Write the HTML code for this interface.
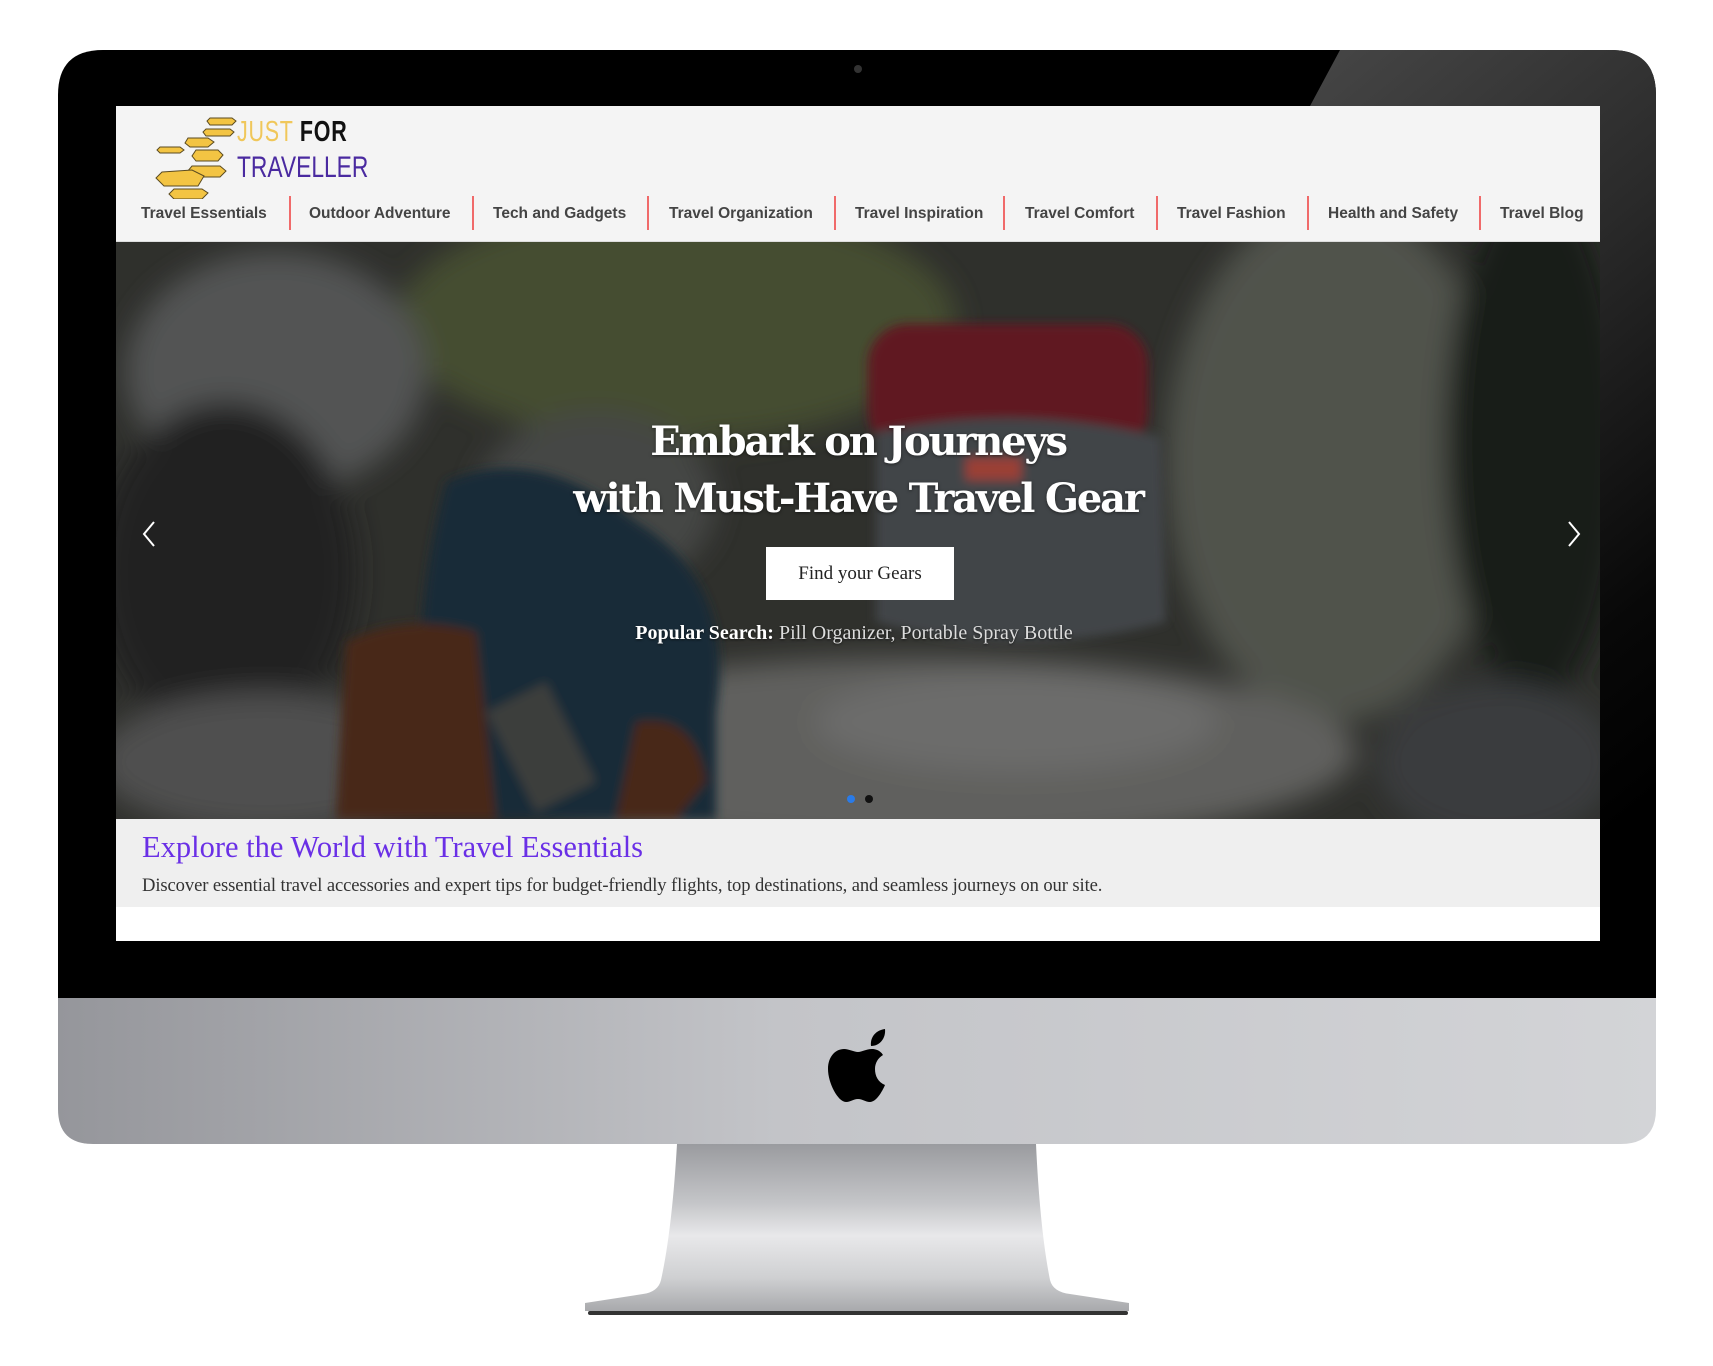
<!DOCTYPE html>
<html><head><meta charset="utf-8"><style>
*{margin:0;padding:0;box-sizing:border-box}
body{width:1713px;height:1366px;background:#fff;position:relative;overflow:hidden;font-family:"Liberation Sans",sans-serif}
.abs{position:absolute}
#screen{left:116px;top:106px;width:1484px;height:835px;background:#fff;overflow:hidden}
#hdr{left:0;top:0;width:1484px;height:136px;background:#f4f4f4;border-bottom:1px solid #ddd}
.nav{top:98px;font-weight:bold;font-size:15.5px;color:#444;line-height:20px;white-space:nowrap}
.sep{top:90px;width:2px;height:34px;background:#f06a6a}
#hero{left:0;top:136px;width:1484px;height:577px;overflow:hidden}
.t{color:#fff;font-family:"DejaVu Serif","Liberation Serif",serif;font-weight:bold;text-align:center;width:1484px;left:0;letter-spacing:-2.2px;text-shadow:0 1px 3px rgba(0,0,0,.5)}
#exp{left:0;top:713px;width:1484px;height:88px;background:#efefef}
</style></head><body>
<svg class="abs" style="left:0;top:0" width="1713" height="1366">
<defs>
<linearGradient id="chin" x1="0" x2="1"><stop offset="0" stop-color="#95969b"/><stop offset=".45" stop-color="#c3c4c8"/><stop offset="1" stop-color="#d3d4d7"/></linearGradient>
<linearGradient id="neck" x1="0" y1="0" x2="0" y2="1"><stop offset="0" stop-color="#9a9b9f"/><stop offset=".35" stop-color="#c4c5c8"/><stop offset=".55" stop-color="#e8e8ea"/><stop offset=".8" stop-color="#cfd0d2"/><stop offset="1" stop-color="#a8a9ac"/></linearGradient>
<linearGradient id="glare" x1="0" y1="0" x2="0.3" y2="1"><stop offset="0" stop-color="#464646"/><stop offset=".4" stop-color="#2a2a2a"/><stop offset=".8" stop-color="#080808"/><stop offset="1" stop-color="#000"/></linearGradient>
</defs>
<path d="M58,998 L58,95 Q58,50 103,50 L1611,50 Q1656,50 1656,95 L1656,998 Z" fill="#000"/>
<path d="M1340,50 L1611,50 Q1656,50 1656,95 L1656,998 L1600,998 L1600,106 L1310,106 Z" fill="url(#glare)"/>
<path d="M58,998 L1656,998 L1656,1109 Q1656,1144 1621,1144 L93,1144 Q58,1144 58,1109 Z" fill="url(#chin)"/>
<circle cx="858" cy="69" r="4" fill="#333"/>
<path d="M677,1144 L1036,1144 Q1040,1230 1050,1280 Q1053,1292 1070,1294 L1129,1303 L1129,1311 L585,1311 L585,1303 L643,1294 Q658,1292 661,1280 Q672,1230 677,1144 Z" fill="url(#neck)"/>
<rect x="588" y="1311" width="540" height="4" rx="2" fill="#333"/>
<g transform="translate(17,0)">
<path d="M868 1029c-8 1-15 7-14 17 9 0 15-8 14-17zM855 1049c-6 0-10 3-14 3s-9-3-14-3c-8 0-16 7-16 20 0 14 10 33 18 33 5 0 7-3 12-3s7 3 12 3c6 0 12-10 15-17-7-3-10-9-10-16 0-6 3-11 8-14-3-5-8-6-11-6z" fill="#000"/>
</g>
</svg>
<div id="screen" class="abs">
 <div id="hdr" class="abs">
  <svg class="abs" style="left:32px;top:8px" width="120" height="85">
   <g fill="#f3c443" stroke="#5a4a20" stroke-width="1">
    <path d="M62,4 l22,0 4,3 -4,4 -22,0 -3,-4z"/><path d="M58,15 l24,0 4,3 -4,4 -24,0 -3,-4z"/>
    <path d="M40,24 l20,0 6,4 -6,5 -18,0 -5,-4z"/><path d="M12,33 l20,0 4,3 -4,3 -20,0 -3,-3z"/>
    <path d="M48,36 l22,0 5,5 -5,6 -22,0 -4,-5z"/><path d="M44,52 l28,0 6,5 -6,6 -28,0 -5,-5z"/>
    <path d="M14,58 l30,-2 12,6 -6,10 -34,0 -8,-8z"/><path d="M26,75 l28,0 6,4 -6,6 -28,0 -5,-5z"/>
   </g>
  </svg>
  <div class="abs" style="left:121px;top:10px;font-size:29px;letter-spacing:1px;transform:scaleX(.74);transform-origin:0 0;white-space:nowrap"><span style="color:#f0c75a">JUST</span> <span style="color:#111;font-weight:bold">FOR</span></div>
  <div class="abs" style="left:121px;top:45px;font-size:30px;color:#4a2aa0;transform:scaleX(.76);transform-origin:0 0;white-space:nowrap">TRAVELLER</div>
  <div class="abs nav" style="left:25px">Travel Essentials</div>
  <div class="abs sep" style="left:173px"></div>
  <div class="abs nav" style="left:193px">Outdoor Adventure</div>
  <div class="abs sep" style="left:356px"></div>
  <div class="abs nav" style="left:377px">Tech and Gadgets</div>
  <div class="abs sep" style="left:531px"></div>
  <div class="abs nav" style="left:553px">Travel Organization</div>
  <div class="abs sep" style="left:718px"></div>
  <div class="abs nav" style="left:739px">Travel Inspiration</div>
  <div class="abs sep" style="left:887px"></div>
  <div class="abs nav" style="left:909px">Travel Comfort</div>
  <div class="abs sep" style="left:1040px"></div>
  <div class="abs nav" style="left:1061px">Travel Fashion</div>
  <div class="abs sep" style="left:1191px"></div>
  <div class="abs nav" style="left:1212px">Health and Safety</div>
  <div class="abs sep" style="left:1363px"></div>
  <div class="abs nav" style="left:1384px">Travel Blog</div>
 </div>
 <div id="hero" class="abs">
  <svg width="1484" height="577" style="position:absolute;left:0;top:0">
   <defs><filter id="b"><feGaussianBlur stdDeviation="14"/></filter><filter id="b2"><feGaussianBlur stdDeviation="5"/></filter></defs>
   <rect width="1484" height="577" fill="#363733"/>
   <g filter="url(#b)">
    <ellipse cx="560" cy="80" rx="280" ry="120" fill="#4f5838"/>
    <ellipse cx="160" cy="130" rx="150" ry="120" fill="#5e6060"/>
    <ellipse cx="110" cy="330" rx="130" ry="170" fill="#262725"/>
    <ellipse cx="1220" cy="220" rx="170" ry="260" fill="#5c5e57"/>
    <ellipse cx="1420" cy="200" rx="90" ry="260" fill="#1e201d"/>
    <ellipse cx="1380" cy="520" rx="120" ry="80" fill="#434446"/>
    <ellipse cx="800" cy="510" rx="440" ry="95" fill="#6e6e6c"/>
    <ellipse cx="900" cy="480" rx="200" ry="50" fill="#7c7c7a"/>
    <ellipse cx="150" cy="520" rx="170" ry="70" fill="#5a5a5a"/>
    <ellipse cx="480" cy="260" rx="120" ry="90" fill="#4f5150"/>
   </g>
   <g filter="url(#b2)">
    <rect x="752" y="82" width="280" height="128" rx="40" fill="#6e1c26"/>
    <path d="M760,190 Q900,160 1045,195 L1050,380 Q900,420 760,380 Z" fill="#4c4f52"/>
    <rect x="850" y="216" width="55" height="22" fill="#b04a3c"/>
    <path d="M330,240 Q420,200 520,280 Q620,340 600,470 L600,577 L330,577 Q280,430 330,240Z" fill="#1c3140"/>
    <path d="M230,400 Q290,370 360,390 L380,577 L220,577 Z" fill="#522e1f"/>
    <path d="M520,480 Q580,470 590,540 L560,577 L500,577Z" fill="#522e1f"/>
    <path d="M370,470 L430,440 L480,540 L420,570Z" fill="#454745"/>
   </g>
   <rect width="1484" height="577" fill="rgba(0,0,0,.12)"/>
   <path d="M38,280 L28,292 L38,304" stroke="#fff" stroke-width="2" fill="none"/>
   <path d="M1453,280 L1463,292 L1453,304" stroke="#fff" stroke-width="2" fill="none"/>
   <circle cx="735" cy="557" r="4" fill="#2a7be8"/><circle cx="753" cy="557" r="4" fill="#111"/>
  </svg>
  <div class="abs t" style="top:175px;font-size:40px;line-height:50px">Embark on Journeys</div>
  <div class="abs t" style="top:232px;font-size:40px;line-height:50px">with Must-Have Travel Gear</div>
  <div class="abs" style="left:650px;top:305px;width:188px;height:53px;background:#fff;font-family:'Liberation Serif',serif;font-size:19px;color:#222;text-align:center;line-height:53px">Find your Gears</div>
  <div class="abs" style="left:-4px;width:1484px;top:380px;text-align:center;font-family:'Liberation Serif',serif;font-size:20px;color:#ddd;text-shadow:0 1px 2px rgba(0,0,0,.6)"><b style="color:#fff">Popular Search:</b> Pill Organizer, Portable Spray Bottle</div>
 </div>
 <div id="exp" class="abs">
  <div class="abs" style="left:26px;top:11px;font-family:'Liberation Serif',serif;font-size:30.5px;color:#6a2fe6">Explore the World with Travel Essentials</div>
  <div class="abs" style="left:26px;top:56px;font-family:'Liberation Serif',serif;font-size:18.6px;color:#333;letter-spacing:-.1px">Discover essential travel accessories and expert tips for budget-friendly flights, top destinations, and seamless journeys on our site.</div>
 </div>
</div>
</body></html>
